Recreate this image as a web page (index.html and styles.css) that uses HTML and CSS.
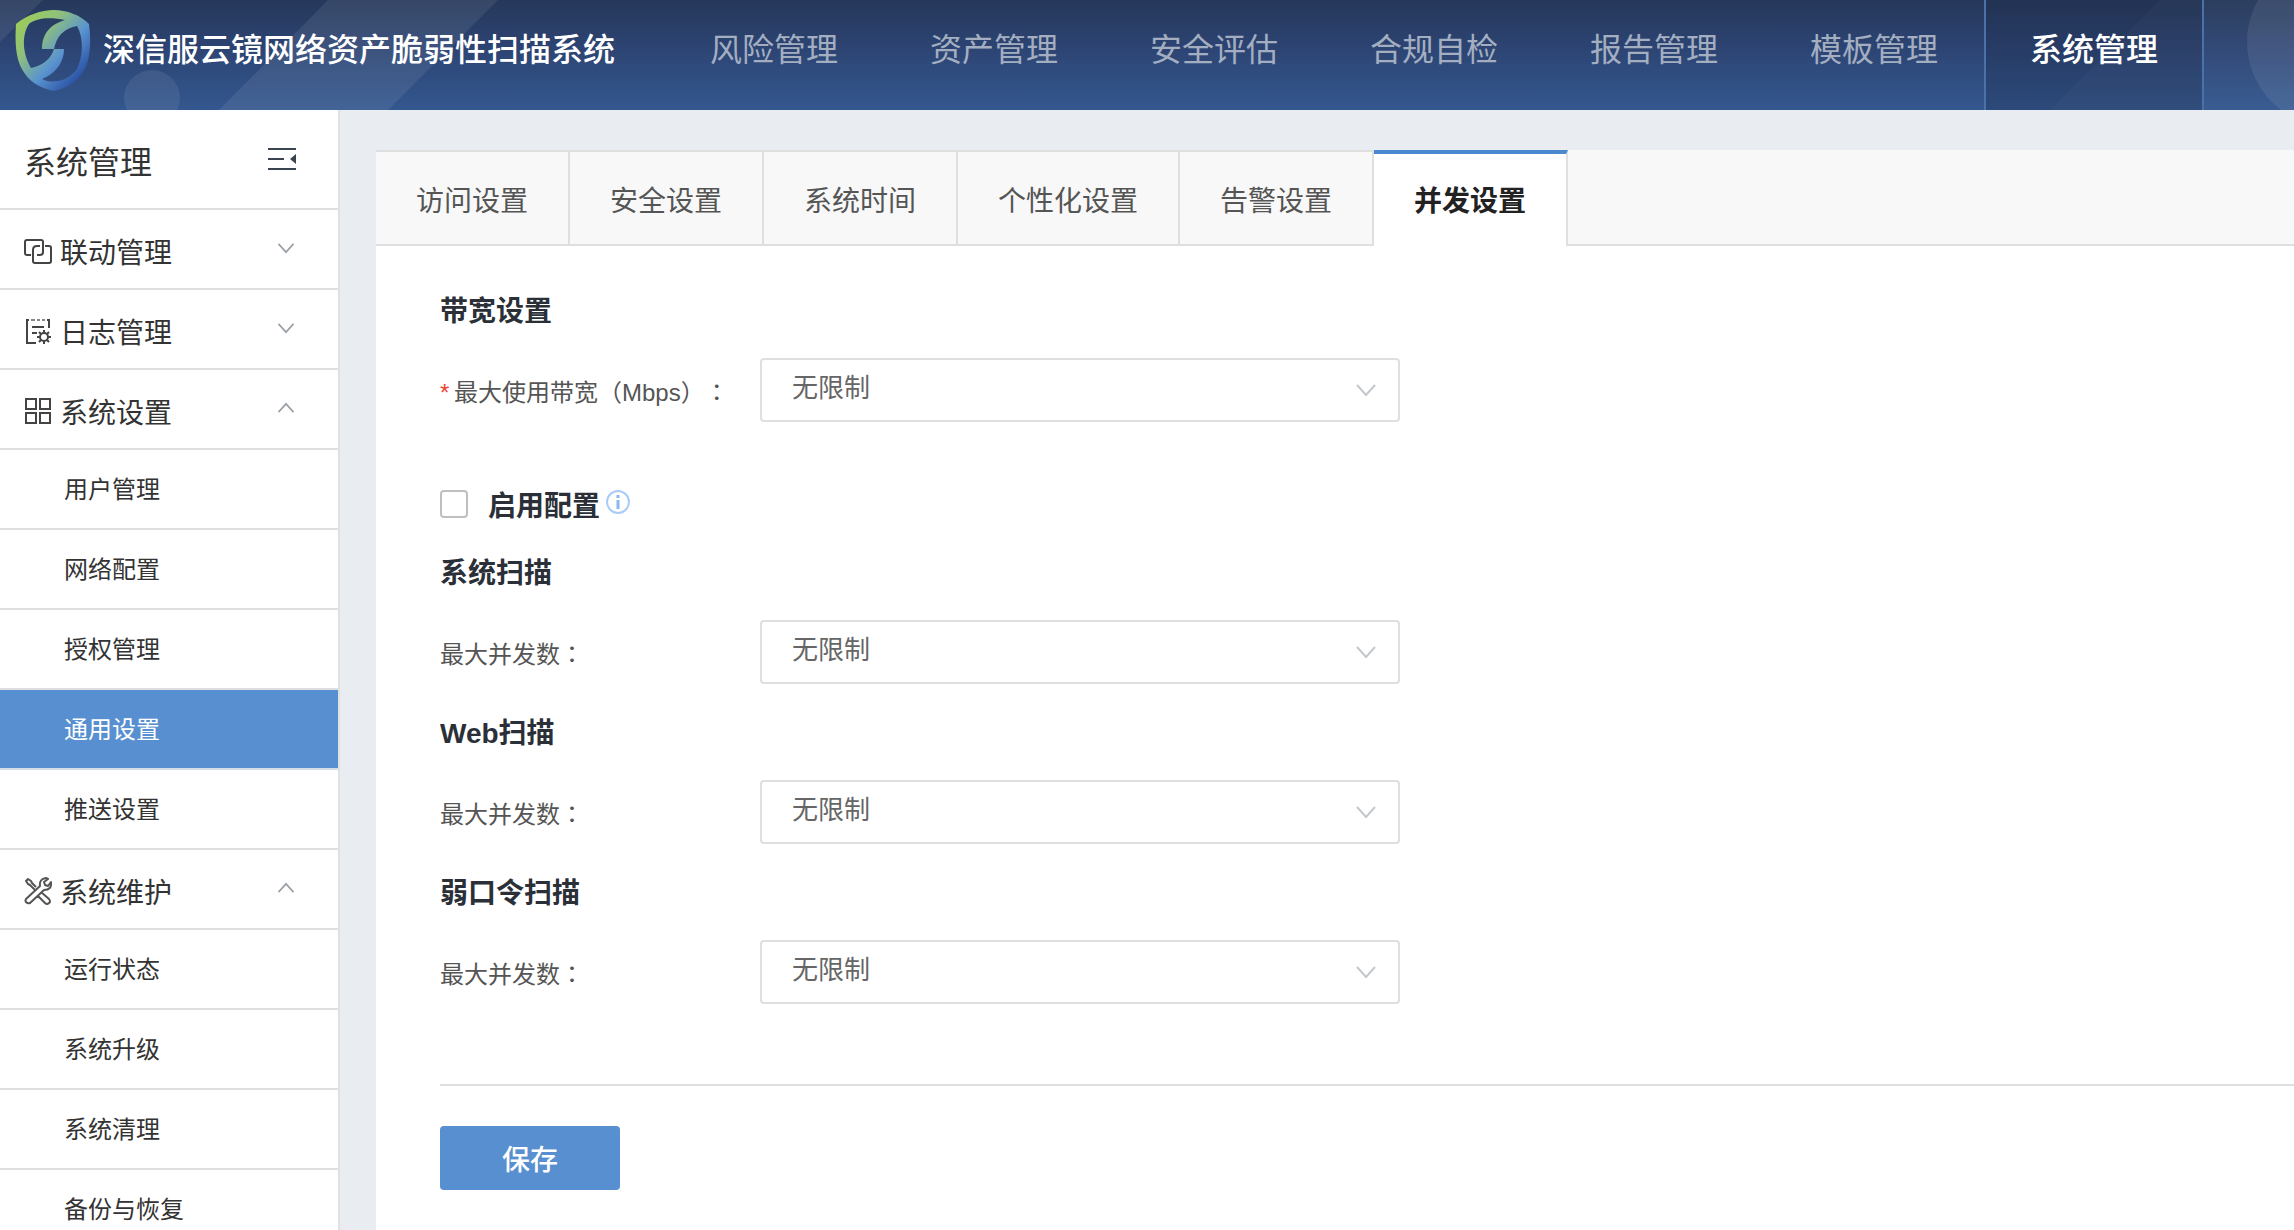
FILE: index.html
```html
<!DOCTYPE html>
<html lang="zh-CN">
<head>
<meta charset="utf-8">
<meta name="viewport" content="width=device-width, initial-scale=1">
<title>并发设置</title>
<link rel="stylesheet" href="styles.css">
</head>
<body>
<svg class="sprite" aria-hidden="true">
  <symbol id="chevron-down" viewBox="0 0 24 24"><path d="M3 7l9 10 9-10" fill="none" stroke="currentColor" stroke-width="2"/></symbol>
  <symbol id="chevron-up" viewBox="0 0 24 24"><path d="M3 17l9-10 9 10" fill="none" stroke="currentColor" stroke-width="2"/></symbol>
</svg>

<header class="topbar">
  <svg class="decor decor-left" viewBox="0 0 520 110" aria-hidden="true">
    <path d="M0 0h43L0 42zM328 0h170L388 110H219z"/>
    <circle cx="152" cy="98" r="28"/>
  </svg>
  <svg class="decor decor-right" viewBox="0 0 260 110" aria-hidden="true">
    <path class="faint" d="M126 0h134v110H16z"/>
    <circle cx="298" cy="42" r="85"/>
  </svg>
  <div class="brand">
    <svg class="logo" viewBox="0 0 78 84" aria-hidden="true">
      <defs>
        <linearGradient id="shield" x1="0" y1="0" x2="1" y2="1">
          <stop offset="0.1" stop-color="#9ccb5c"/>
          <stop offset="0.32" stop-color="#8fc07c"/>
          <stop offset="0.58" stop-color="#5a93d0"/>
          <stop offset="0.85" stop-color="#2a52a4"/>
        </linearGradient>
      </defs>
      <path fill="url(#shield)" fill-rule="evenodd" d="M1 15C12 6 26 1 39 1s26 5 35 14c2 16 2 34-5 47-6 10-16 17-30 20C24 79 14 72 8 62 0 49 0 31 1 15ZM50 11C35 8 21 9 14 15c-8 12-6 30 2 44 11-2 20-9 23-19H27C27 27 33 16 50 11ZM62 17C48 20 42 27 39 40h10c0 11-6 24-22 30 12 6 27 1 35-10 6-12 7-31 0-43Z"/>
    </svg>
    <h1 class="brand-name">深信服云镜网络资产脆弱性扫描系统</h1>
  </div>
  <nav class="topnav">
    <a href="#">风险管理</a>
    <a href="#">资产管理</a>
    <a href="#">安全评估</a>
    <a href="#">合规自检</a>
    <a href="#">报告管理</a>
    <a href="#">模板管理</a>
    <a href="#" class="active" aria-current="page">系统管理</a>
  </nav>
</header>

<div class="layout">
  <aside class="sidebar">
    <div class="side-head">
      <h2>系统管理</h2>
      <button class="collapse" type="button" aria-label="收起菜单">
        <svg viewBox="0 0 28 24"><path d="M0 2h28M0 12h16M0 22h28" fill="none" stroke="#3a4350" stroke-width="2"/><path d="M28 7v10l-6-5z" fill="#3a4350"/></svg>
      </button>
    </div>
    <nav class="side-nav">
      <button class="group" type="button">
        <svg class="group-icon" viewBox="0 0 28 28" fill="none" stroke="#444" stroke-width="2"><path d="M7 18H3q-2 0-2-2V5q0-2 2-2h14q2 0 2 2v10q0 3-3 3h-3"/><path d="M21 9h4q2 0 2 2v13q0 2-2 2H11q-2 0-2-2V13q0-4 4-4h3"/></svg>
        <span>联动管理</span>
        <svg class="chev"><use href="#chevron-down"/></svg>
      </button>
      <button class="group" type="button">
        <svg class="group-icon" viewBox="0 0 28 28" fill="none" stroke="#444" stroke-width="2"><path d="M5 3H3v23h9M23 3h2v8M8 10h12M8 16h5"/><path d="M7 3h4M13 3h3M18 3h3" stroke="#888"/><circle cx="20" cy="20" r="4"/><path d="M20 13v3M20 24v3M13 20h3M24 20h3M15 15l2 2M23 23l2 2M25 15l-2 2M17 23l-2 2"/></svg>
        <span>日志管理</span>
        <svg class="chev"><use href="#chevron-down"/></svg>
      </button>
      <button class="group" type="button" aria-expanded="true">
        <svg class="group-icon" viewBox="0 0 28 28" fill="none" stroke="#444" stroke-width="2"><path d="M2 2h10v10H2zM16 2h10v10H16zM2 16h10v10H2zM16 16h10v10H16z"/></svg>
        <span>系统设置</span>
        <svg class="chev"><use href="#chevron-up"/></svg>
      </button>
      <a class="item" href="#">用户管理</a>
      <a class="item" href="#">网络配置</a>
      <a class="item" href="#">授权管理</a>
      <a class="item active" href="#" aria-current="page">通用设置</a>
      <a class="item" href="#">推送设置</a>
      <button class="group" type="button" aria-expanded="true">
        <svg class="group-icon" viewBox="0 0 28 28" fill="none" stroke="#555" stroke-width="2" stroke-linejoin="round"><path d="M12 10L8 6 7 4 4 2 2 4l2 3 2 1 5 5M17 15l8 7q2 3 0 4-2 2-4 0l-7-7M2 22L16 9q-1-7 6-8l2 1-4 3 1 3 3 1 3-4q1 8-7 8L6 26q-2 1-4-1-1-1 0-3z"/></svg>
        <span>系统维护</span>
        <svg class="chev"><use href="#chevron-up"/></svg>
      </button>
      <a class="item" href="#">运行状态</a>
      <a class="item" href="#">系统升级</a>
      <a class="item" href="#">系统清理</a>
      <a class="item" href="#">备份与恢复</a>
    </nav>
  </aside>

  <main class="main">
    <nav class="tabs">
      <a href="#">访问设置</a>
      <a href="#">安全设置</a>
      <a href="#">系统时间</a>
      <a href="#">个性化设置</a>
      <a href="#">告警设置</a>
      <a href="#" class="active" aria-current="page">并发设置</a>
    </nav>

    <form class="panel">
      <section class="block first">
        <h3>带宽设置</h3>
        <div class="field">
          <label for="bandwidth"><span class="required">*</span>最大使用带宽<span class="punct" lang="zh-TW">（</span>Mbps<span class="punct" lang="zh-TW">）：</span></label>
          <div class="select"><select id="bandwidth"><option>无限制</option></select><svg><use href="#chevron-down"/></svg></div>
        </div>
      </section>

      <div class="enable">
        <input type="checkbox" id="enable">
        <label for="enable">启用配置</label>
        <svg class="info" viewBox="0 0 24 24" aria-hidden="true"><circle cx="12" cy="12" r="11" fill="none" stroke="#a9cbf7" stroke-width="2"/><path d="M12 5v3M12 10v9" stroke="#8ab6f2" stroke-width="3"/></svg>
      </div>

      <section class="block">
        <h3>系统扫描</h3>
        <div class="field">
          <label for="sys">最大并发数<span class="punct" lang="zh-TW">：</span></label>
          <div class="select"><select id="sys"><option>无限制</option></select><svg><use href="#chevron-down"/></svg></div>
        </div>
      </section>
      <section class="block">
        <h3>Web扫描</h3>
        <div class="field">
          <label for="web">最大并发数<span class="punct" lang="zh-TW">：</span></label>
          <div class="select"><select id="web"><option>无限制</option></select><svg><use href="#chevron-down"/></svg></div>
        </div>
      </section>
      <section class="block">
        <h3>弱口令扫描</h3>
        <div class="field">
          <label for="weak">最大并发数<span class="punct" lang="zh-TW">：</span></label>
          <div class="select"><select id="weak"><option>无限制</option></select><svg><use href="#chevron-down"/></svg></div>
        </div>
      </section>

      <div class="actions">
        <button class="save" type="submit">保存</button>
      </div>
    </form>
  </main>
</div>
</body>
</html>
```
FILE: styles.css
```css
* {
  box-sizing: border-box;
}

body {
  display: flex;
  flex-direction: column;
  height: 100vh;
  margin: 0;
  overflow: hidden;
  background: #e9ecf1;
  color: #333;
  font-family: "Liberation Sans", "Noto Sans CJK SC", sans-serif;
  font-size: 24px;
}

a {
  color: inherit;
  text-decoration: none;
}

button,
select,
input {
  margin: 0;
  font: inherit;
  color: inherit;
}

h1,
h2,
h3 {
  margin: 0;
}

.sprite {
  position: absolute;
  width: 0;
  height: 0;
}

/* Top bar */
.topbar {
  position: relative;
  display: flex;
  flex: none;
  height: 110px;
  overflow: hidden;
  background: linear-gradient(#26385a, #2c4371 40%, #33578f);
}

.decor {
  position: absolute;
  top: 0;
  height: 110px;
  fill: #fff;
  fill-opacity: 0.08;
}

.decor-left {
  left: 0;
  width: 520px;
}

.decor-right {
  right: 0;
  width: 260px;
}

.decor .faint {
  fill-opacity: 0.03;
}

.brand {
  position: relative;
  display: flex;
  gap: 10px;
  width: 664px;
  padding: 9px 0 0 15px;
}

.logo {
  width: 78px;
  height: 84px;
}

.brand-name {
  color: #fff;
  font-size: 32px;
  font-weight: 500;
  line-height: 82px;
  white-space: nowrap;
}

.topnav {
  position: relative;
  display: flex;
}

.topnav a {
  width: 220px;
  color: #a3afc1;
  font-size: 32px;
  line-height: 100px;
  text-align: center;
}

.topnav .active {
  border: solid #4a72a8;
  border-width: 0 2px;
  background: rgba(24, 36, 62, 0.25);
  color: #fff;
  font-weight: 500;
}

/* Page body */
.layout {
  display: flex;
  flex: 1;
  min-height: 0;
}

.sidebar {
  flex: none;
  width: 340px;
  overflow: hidden;
  border-right: 2px solid #e0e1e3;
  background: #fff;
}

.side-head {
  display: flex;
  align-items: center;
  justify-content: space-between;
  height: 100px;
  padding: 2px 42px 0 24px;
  border-bottom: 2px solid #dfdfdf;
}

.side-head h2 {
  font-size: 32px;
  font-weight: 400;
}

.collapse {
  padding: 0;
  border: 0;
  background: none;
}

.collapse svg {
  display: block;
  width: 28px;
  height: 24px;
  margin-bottom: 2px;
}

.side-nav {
  display: flex;
  flex-direction: column;
}

.group {
  display: flex;
  align-items: center;
  gap: 8px;
  height: 80px;
  padding: 4px 42px 0 24px;
  border: 0;
  border-bottom: 2px solid #dfdfdf;
  background: none;
  font-size: 28px;
  text-align: left;
}

.group-icon {
  width: 28px;
  height: 28px;
}

.chev {
  width: 20px;
  height: 20px;
  margin: 0 0 6px auto;
  color: #9aa0a8;
}

.item {
  height: 80px;
  padding-left: 64px;
  border-bottom: 2px solid #dfdfdf;
  line-height: 80px;
}

.item.active {
  border-color: #d5dde8;
  background: #578fd0;
  background-clip: padding-box;
  color: #fff;
}

.main {
  display: flex;
  flex: 1;
  flex-direction: column;
  min-width: 0;
  padding: 40px 0 0 36px;
}

.tabs {
  display: flex;
  flex: none;
  height: 96px;
  background: #f8f8f8;
  box-shadow: inset 0 -2px #dfdfdf;
}

.tabs a {
  padding: 0 40px;
  border-top: 2px solid #dfdfdf;
  border-right: 2px solid #dfdfdf;
  color: #555;
  font-size: 28px;
  line-height: 100px;
}

.tabs .active {
  border-top: 4px solid #4a88d0;
  background: #fff;
  color: #222;
  font-weight: 700;
  line-height: 96px;
}

/* Settings form */
.panel {
  flex: 1;
  padding: 46px 0 0 64px;
  background: #fff;
}

.block {
  padding-bottom: 30px;
}

.block.first {
  padding-bottom: 62px;
}

h3 {
  font-size: 28px;
  font-weight: 700;
  line-height: 40px;
  color: #2b3038;
}

.field {
  display: flex;
  align-items: center;
  height: 64px;
  margin-top: 26px;
}

.field label {
  width: 320px;
  color: #555;
  white-space: nowrap;
}

.punct {
  font-family: "Noto Sans CJK TC", sans-serif;
  text-spacing-trim: space-all;
}

.required {
  display: inline-block;
  width: 14px;
  color: #f04134;
}

.select {
  display: grid;
  align-items: center;
  width: 640px;
  height: 64px;
}

.select select {
  grid-area: 1 / 1;
  width: 100%;
  height: 64px;
  padding: 0 60px 4px 30px;
  border: 2px solid #dfdfdf;
  border-radius: 4px;
  background: #fff;
  color: #666;
  font-size: 26px;
  appearance: none;
}

.select svg {
  grid-area: 1 / 1;
  justify-self: end;
  width: 24px;
  height: 24px;
  margin-right: 22px;
  color: #c3c8ce;
  pointer-events: none;
}

.enable {
  display: flex;
  align-items: center;
  height: 40px;
  margin-bottom: 30px;
  color: #2b3038;
  font-size: 28px;
  font-weight: 700;
}

.enable input {
  width: 28px;
  height: 28px;
  margin-right: 20px;
  border: 2px solid #bfbfbf;
  border-radius: 4px;
  background: #fff;
  appearance: none;
}

.enable input:checked {
  border-color: #578fd0;
  background: #578fd0;
}

.info {
  width: 24px;
  height: 24px;
  margin: 0 0 4px 6px;
}

.actions {
  margin-top: 50px;
  padding-top: 40px;
  border-top: 2px solid #dfdfdf;
}

.save {
  width: 180px;
  height: 64px;
  border: 0;
  border-radius: 4px;
  background: #578fd0;
  color: #fff;
  font-size: 28px;
  font-weight: 500;
}
```
